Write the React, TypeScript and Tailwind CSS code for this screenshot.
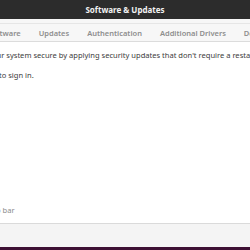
export default function App() {
  return (
    <div
      className="flex h-[250px] w-[250px] flex-col overflow-hidden bg-white"
      style={{ fontFamily: '"Noto Sans", "Open Sans", sans-serif' }}
    >
      {/* title bar */}
      <div className="flex h-[19px] shrink-0 items-center justify-center bg-[#2c2c2c]">
        <span className="text-[8px] font-bold text-[#f2f2f2]">Software &amp; Updates</span>
      </div>

      {/* tabs */}
      <div className="h-[5px] shrink-0 border-b border-[#e6e6e6] bg-[#f7f7f7]" />
      <div className="flex h-[18px] shrink-0 items-center gap-[18px] whitespace-nowrap border-b border-[#dcdcdc] bg-[#f7f7f7] pt-[2px] text-[7.5px] font-semibold text-[#8e8e8e]">
        <span className="-ml-[12px]">Software</span>
        <span>Updates</span>
        <span>Authentication</span>
        <span>Additional Drivers</span>
        <span>Developer Options</span>
      </div>

      {/* body */}
      <div className="flex flex-1 flex-col whitespace-nowrap text-[7.55px] text-[#3c3c3c]">
        <div className="mt-[8px] -ml-[53px]">Helps keep your system secure by applying security updates that don't require a restart.</div>
        <div className="mt-[9px] -ml-[1px]">to sign in.</div>
        <div className="flex-1" />
        <div className="mb-[7px] -ml-[41px] text-[#8c8c8c]">Show in top bar</div>
      </div>

      {/* bottom bar */}
      <div className="h-[24px] shrink-0 border-t border-[#dadada] bg-[#f4f4f4]" />
      <div className="h-[3px] shrink-0 bg-[#3d1033]" />
    </div>
  )
}
